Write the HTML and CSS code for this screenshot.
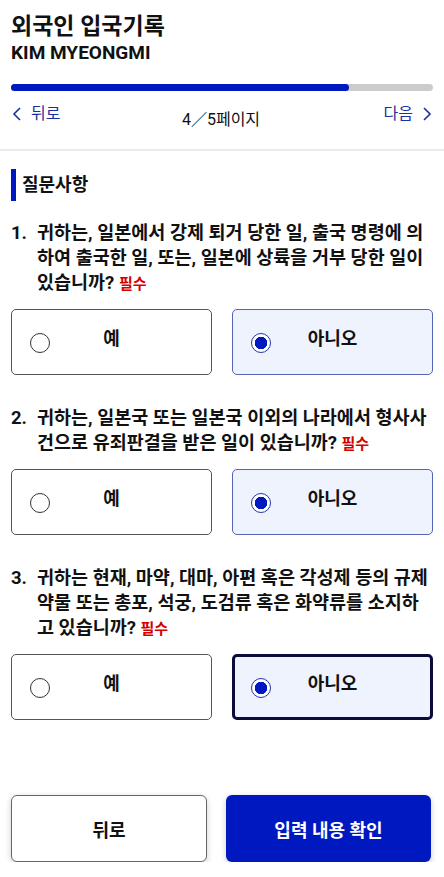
FILE: index.html
```html
<!DOCTYPE html>
<html lang="ko">
<head>
    <meta charset="UTF-8">
    <meta name="viewport" content="width=device-width, initial-scale=1.0">
    <title>외국인 입국기록</title>
    <link rel="stylesheet" href="styles.css">
</head>
<body>
    <header class="header">
        <h1 class="title">외국인 입국기록</h1>
        <p class="name">KIM MYEONGMI</p>
        <div class="progress"><div class="progress-fill" style="width: 80%"></div></div>
        <nav class="pager">
            <a class="pager-link">
                <svg width="12" height="16" viewBox="0 0 12 16"><path d="M9 2 L3 8 L9 14" fill="none" stroke="currentColor" stroke-width="1.6"/></svg>
                뒤로
            </a>
            <span class="pager-count">4／5페이지</span>
            <a class="pager-link">
                다음
                <svg width="12" height="16" viewBox="0 0 12 16"><path d="M3 2 L9 8 L3 14" fill="none" stroke="currentColor" stroke-width="1.6"/></svg>
            </a>
        </nav>
    </header>

    <main class="content">
        <h2 class="section-title">질문사항</h2>

        <div class="question">
            <p class="q-text"><span class="q-num">1.</span><span>귀하는, 일본에서 강제 퇴거 당한 일, 출국 명령에 의하여 출국한 일, 또는, 일본에 상륙을 거부 당한 일이 있습니까? <em class="required">필수</em></span></p>
            <div class="options">
                <label class="option"><span class="radio"></span><span class="opt-label">예</span></label>
                <label class="option selected"><span class="radio"></span><span class="opt-label">아니오</span></label>
            </div>
        </div>

        <div class="question">
            <p class="q-text"><span class="q-num">2.</span><span>귀하는, 일본국 또는 일본국 이외의 나라에서 형사사건으로 유죄판결을 받은 일이 있습니까? <em class="required">필수</em></span></p>
            <div class="options">
                <label class="option"><span class="radio"></span><span class="opt-label">예</span></label>
                <label class="option selected"><span class="radio"></span><span class="opt-label">아니오</span></label>
            </div>
        </div>

        <div class="question">
            <p class="q-text"><span class="q-num">3.</span><span>귀하는 현재, 마약, 대마, 아편 혹은 각성제 등의 규제약물 또는 총포, 석궁, 도검류 혹은 화약류를 소지하고 있습니까? <em class="required">필수</em></span></p>
            <div class="options">
                <label class="option"><span class="radio"></span><span class="opt-label">예</span></label>
                <label class="option selected focused"><span class="radio"></span><span class="opt-label">아니오</span></label>
            </div>
        </div>
    </main>

    <footer class="actions">
        <button class="btn btn-back">뒤로</button>
        <button class="btn btn-confirm">입력 내용 확인</button>
    </footer>
</body>
</html>
```

FILE: styles.css
```css
body {
    margin: 0;
    font-family: Roboto, "Noto Sans CJK KR", sans-serif;
    color: #111;
    background-color: white;
    width: 444px;
}
.header {
    padding: 12px 11px 0;
    border-bottom: 2px solid #ebebeb;
}
.title {
    margin: 0;
    font-size: 23px;
    font-weight: 700;
    line-height: 30px;
}
.name {
    margin: 0;
    font-size: 19px;
    font-weight: 700;
    line-height: 22px;
}
.progress {
    margin-top: 20px;
    height: 7px;
    border-radius: 4px;
    background-color: #cccccc;
}
.progress-fill {
    height: 100%;
    border-radius: 4px;
    background-color: #0018c0;
}
.pager {
    display: flex;
    justify-content: space-between;
    align-items: flex-start;
    height: 46px;
    margin-top: 12px;
}
.pager-link {
    display: flex;
    align-items: center;
    gap: 8px;
    color: #1a2fa0;
    font-size: 16px;
    line-height: 22px;
}
.pager-count {
    font-size: 16px;
    line-height: 22px;
    margin-top: 6px;
    margin-left: -2px;
}
.content {
    padding: 18px 11px 0;
}
.section-title {
    margin: 0;
    font-size: 18px;
    font-weight: 700;
    line-height: 32px;
    border-left: 5px solid #0018c0;
    padding-left: 6px;
}
.question {
    margin-top: 31px;
}
.section-title + .question {
    margin-top: 20px;
}
.q-text {
    display: flex;
    margin: 0;
    font-size: 18.5px;
    font-weight: 700;
    line-height: 25px;
}
.q-num {
    flex: none;
    width: 26px;
}
.required {
    font-style: normal;
    font-size: 15px;
    color: #d40000;
}
.options {
    display: grid;
    grid-template-columns: 1fr 1fr;
    gap: 20px;
    margin-top: 12px;
}
.option {
    position: relative;
    display: flex;
    justify-content: center;
    align-items: center;
    height: 66px;
    border: 1px solid #555;
    border-radius: 5px;
    box-sizing: border-box;
}
.opt-label {
    font-size: 18px;
    font-weight: 700;
    margin-bottom: 10px;
}
.radio {
    position: absolute;
    left: 18px;
    top: 23px;
    width: 20px;
    height: 20px;
    border: 1px solid #333;
    border-radius: 50%;
    box-sizing: border-box;
}
.selected {
    border-color: #5563b8;
    background-color: #eef3fd;
}
.selected .radio {
    border-color: #2336b0;
    background: radial-gradient(circle, #0018c0 0 6px, white 6.5px);
}
.focused {
    border: 3px solid #0c0c3a;
}
.focused .radio {
    left: 16px;
    top: 21px;
}
.actions {
    display: flex;
    gap: 19px;
    padding: 0 13px 0 11px;
    margin-top: 75px;
}
.btn {
    height: 67px;
    border-radius: 6px;
    font-family: Roboto, "Noto Sans CJK KR", sans-serif;
    font-size: 18px;
    font-weight: 700;
    box-shadow: 0 2px 6px rgba(0,0,0,0.2);
}
.btn-back {
    width: 196px;
    background-color: white;
    border: 1px solid #666;
    color: #111;
}
.btn-confirm {
    width: 205px;
    background-color: #0018c0;
    border: none;
    color: white;
}
```
